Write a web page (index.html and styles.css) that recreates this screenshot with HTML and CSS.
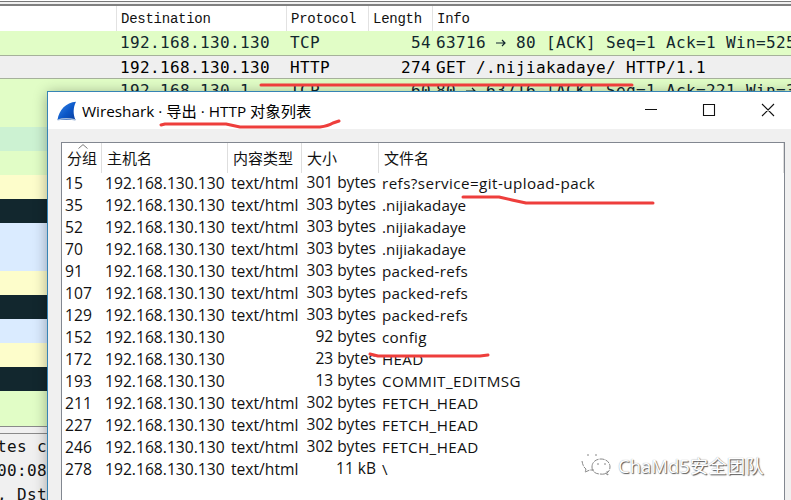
FILE: index.html
```html
<!DOCTYPE html>
<html lang="zh-CN">
<head>
<meta charset="utf-8">
<title>Wireshark</title>
<link rel="stylesheet" href="styles.css">
</head>
<body>
<main class="capture">
  <div class="splitter"></div>
  <div class="packet head"><span></span><span>Destination</span><span>Protocol</span><span>Length</span><span>Info</span></div>
  <div class="packet"><span></span><span>192.168.130.130</span><span>TCP</span><span class="num">54</span><span>63716 <svg class="arrow" viewBox="0 0 10 10"><path d="M0 5h9M6 2l3 3-3 3"/></svg> 80 [ACK] Seq=1 Ack=1 Win=525</span></div>
  <div class="packet selected"><span></span><span>192.168.130.130</span><span>HTTP</span><span class="num">274</span><span>GET /.nijiakadaye/ HTTP/1.1</span></div>
  <div class="packet"><span></span><span>192.168.130.1</span><span>TCP</span><span class="num">60</span><span>80 <svg class="arrow" viewBox="0 0 10 10"><path d="M0 5h9M6 2l3 3-3 3"/></svg> 63716 [ACK] Seq=1 Ack=221 Win=3</span></div>
  <div class="stripe green"></div>
  <div class="stripe teal"></div>
  <div class="stripe green"></div>
  <div class="stripe yellow"></div>
  <div class="stripe dark"></div>
  <div class="stripe blue"></div>
  <div class="stripe blue"></div>
  <div class="stripe yellow"></div>
  <div class="stripe dark"></div>
  <div class="stripe blue"></div>
  <div class="stripe yellow"></div>
  <div class="stripe dark"></div>
  <div class="stripe green last"></div>
  <div class="divider"></div>
  <div class="details"><div>tes ca</div><div>00:08</div><div>, Dst</div></div>
</main>

<section class="dialog">
  <header class="titlebar">
    <svg class="fin" viewBox="0 0 20 20"><defs><linearGradient id="fin" x1="0" y1="0" x2="1" y2="1"><stop offset="0" stop-color="#3c8be8"/><stop offset=".55" stop-color="#0b57c8"/><stop offset="1" stop-color="#0a3d9c"/></linearGradient></defs><path d="M.5 19C2 9 9 1.500 19 .8 16 7 16 13 18.500 19Z" fill="url(#fin)"/><path d="M.5 19Q9 16.500 18.500 19" fill="none" stroke="#a9bfdc" stroke-width="1.300"/></svg>
    <h1>Wireshark · 导出 · HTTP 对象列表</h1>
    <svg class="controls" viewBox="0 0 131 14"><path d="M1 6.500h12M59.500 1.500h11v11h-11zM118 1l12 12M130 1l-12 12"/></svg>
  </header>
  <div class="panel">
    <div class="row labels"><span>分组</span><span>主机名</span><span>内容类型</span><span>大小</span><span>文件名</span><svg class="sort" viewBox="0 0 10 5"><path d="M.5 4.500L5 .6l4.500 3.900"/></svg></div>
    <div class="row"><span>15</span><span>192.168.130.130</span><span>text/html</span><span>301 bytes</span><span class="wide">refs?service=git-upload-pack</span></div>
    <div class="row"><span>35</span><span>192.168.130.130</span><span>text/html</span><span>303 bytes</span><span class="tight">.nijiakadaye</span></div>
    <div class="row"><span>52</span><span>192.168.130.130</span><span>text/html</span><span>303 bytes</span><span class="tight">.nijiakadaye</span></div>
    <div class="row"><span>70</span><span>192.168.130.130</span><span>text/html</span><span>303 bytes</span><span class="tight">.nijiakadaye</span></div>
    <div class="row"><span>91</span><span>192.168.130.130</span><span>text/html</span><span>303 bytes</span><span>packed-refs</span></div>
    <div class="row"><span>107</span><span>192.168.130.130</span><span>text/html</span><span>303 bytes</span><span>packed-refs</span></div>
    <div class="row"><span>129</span><span>192.168.130.130</span><span>text/html</span><span>303 bytes</span><span>packed-refs</span></div>
    <div class="row"><span>152</span><span>192.168.130.130</span><span></span><span>92 bytes</span><span>config</span></div>
    <div class="row"><span>172</span><span>192.168.130.130</span><span></span><span>23 bytes</span><span>HEAD</span></div>
    <div class="row"><span>193</span><span>192.168.130.130</span><span></span><span>13 bytes</span><span class="wide">COMMIT_EDITMSG</span></div>
    <div class="row"><span>211</span><span>192.168.130.130</span><span>text/html</span><span>302 bytes</span><span class="wide">FETCH_HEAD</span></div>
    <div class="row"><span>227</span><span>192.168.130.130</span><span>text/html</span><span>302 bytes</span><span class="wide">FETCH_HEAD</span></div>
    <div class="row"><span>246</span><span>192.168.130.130</span><span>text/html</span><span>302 bytes</span><span class="wide">FETCH_HEAD</span></div>
    <div class="row"><span>278</span><span>192.168.130.130</span><span>text/html</span><span>11 kB</span><span>\</span></div>
  </div>
</section>

<div class="watermark">
  <svg viewBox="0 0 34 24"><path d="M2 7Q3 13 6 15l-1 3 5-2h4M7 1h2M15 1h2"/><path d="M12 13c0-5 4-8 9-8s9 3 9 8-4 8-10 7c-5 0-8-3-8-7zM25 19l3 2-1-4"/><path d="M17 10h2M24 10h2"/></svg>
  <span>ChaMd5安全团队</span>
</div>

<svg class="marks" viewBox="0 0 791 500">
  <path d="M261 85H632"/>
  <path d="M161 125l4-1H226l14 3H320q8-1 13-4l6-2"/>
  <path d="M463 197H499l13 3 14 3H653"/>
  <path d="M370 354l8 2H480l8-1"/>
</svg>
</body>
</html>
```
FILE: styles.css
```css
* { box-sizing: border-box; }
body {
  margin: 0;
  width: 791px;
  height: 500px;
  overflow: hidden;
  position: relative;
  background: #f0f0f0;
  color: #111;
}
.capture { font: 16px/24px "DejaVu Sans Mono", monospace; letter-spacing: .37px; }
.splitter { height: 6px; border-top: 1px solid #fff; border-bottom: 2px solid #808080; background: linear-gradient(#777 1px, #f0f0f0 1px); }
.packet {
  display: grid;
  grid-template-columns: 120px 170px 83px 58px 1fr;
  height: 24px;
  background: #e1fdc6;
  color: #12272e;
  white-space: pre;
  overflow: hidden;
}
.packet .num { text-align: right; }
.packet > :last-child { padding-left: 5px; }
.packet.head {
  height: 25px;
  background: #fff;
  color: #111;
  font: 14px/26px "Liberation Mono", monospace;
  letter-spacing: -.25px;
  grid-template-columns: 116px 170px 82px 64px 1fr;
}
.packet.head span + span { border-left: 1px solid #e2e2e2; padding-left: 4px; }
.packet.selected { background: #efefef; color: #000; border: solid #a6b19b; border-width: 1px 0; }
.arrow { width: 10px; height: 10px; fill: none; stroke: #12272e; stroke-width: 1.2; }
.stripe { height: 24px; background: var(--tone); }
.green { --tone: #e1fdc6; }
.teal { --tone: #ccf2d2; }
.yellow { --tone: #fdfdcb; }
.dark { --tone: #12272e; }
.blue { --tone: #daebff; }
.last { height: 35px; }
.divider { height: 8px; border-top: 1px solid #8a8a8a; border-bottom: 1px solid #8a8a8a; background: #f0f0f0; }
.details { line-height: 24px; padding-top: 1px; margin-left: -3px; white-space: pre; }
.dialog {
  position: absolute;
  left: 47px;
  top: 91px;
  width: 752px;
  height: 420px;
  border: 1px solid #3684b5;
  background: #f0f0f0;
  box-shadow: 0 2px 13px #0005;
  font-family: "Open Sans", "Noto Sans CJK SC", sans-serif;
}
.titlebar { height: 37px; display: flex; align-items: center; padding-left: 9px; background: #fff; }
.fin { width: 20px; height: 20px; margin-right: 5px; }
.titlebar h1 { margin: 0 0 2px; font-size: 15.300px; font-weight: 400; width: 509px; white-space: nowrap; color: #000; }
.controls { flex: none; width: 131px; height: 14px; margin: 0 0 2px 53px; fill: none; stroke: #111; stroke-width: 1.1; }
.panel { width: 724px; height: 380px; margin: 13px 0 0 13px; border: 1px solid #828790; background: #fff; }
.row {
  display: grid;
  grid-template-columns: 40px 126px 74px 77px 1fr;
  height: 22px;
  font-size: 15.650px;
  line-height: 20px;
  white-space: nowrap;
}
.row > span { padding-left: 3px; }
.row > span:nth-child(4) { padding-right: 3px; text-align: right; line-height: 19px; font-size: 15.500px; }
.row > span:nth-child(5) { font-size: 15.200px; letter-spacing: .3px; }
.row > span.wide { letter-spacing: .43px; }
.row > span.tight { letter-spacing: .05px; }
.row.labels { height: 30px; position: relative; font-size: 15px; line-height: 30px; }
.row.labels > span { padding-left: 5px; border-right: 1px solid #dedede; }
.row.labels > span:nth-child(4) { text-align: left; line-height: 30px; font-size: 15px; }
.row.labels > span:nth-child(5) { font-size: 15px; letter-spacing: 0; }
.sort { position: absolute; left: 16px; top: 1px; width: 10px; height: 5px; fill: none; stroke: #555; stroke-width: .8; }
.watermark {
  position: absolute;
  left: 580px;
  top: 452px;
  display: flex;
  align-items: center;
  gap: 4px;
  font: 18.500px/28px "Open Sans", "Noto Sans CJK SC", sans-serif;
  color: #fff;
  text-shadow: 1px 1px 1px #555, 0 0 1px #999;
  white-space: nowrap;
}
.watermark svg { width: 34px; height: 24px; fill: none; stroke: #888; stroke-width: 1; stroke-dasharray: 5 1; }
.marks { position: absolute; inset: 0; width: 791px; height: 500px; fill: none; stroke: #ee3e3c; stroke-width: 3; stroke-linecap: round; stroke-linejoin: round; pointer-events: none; }
```
